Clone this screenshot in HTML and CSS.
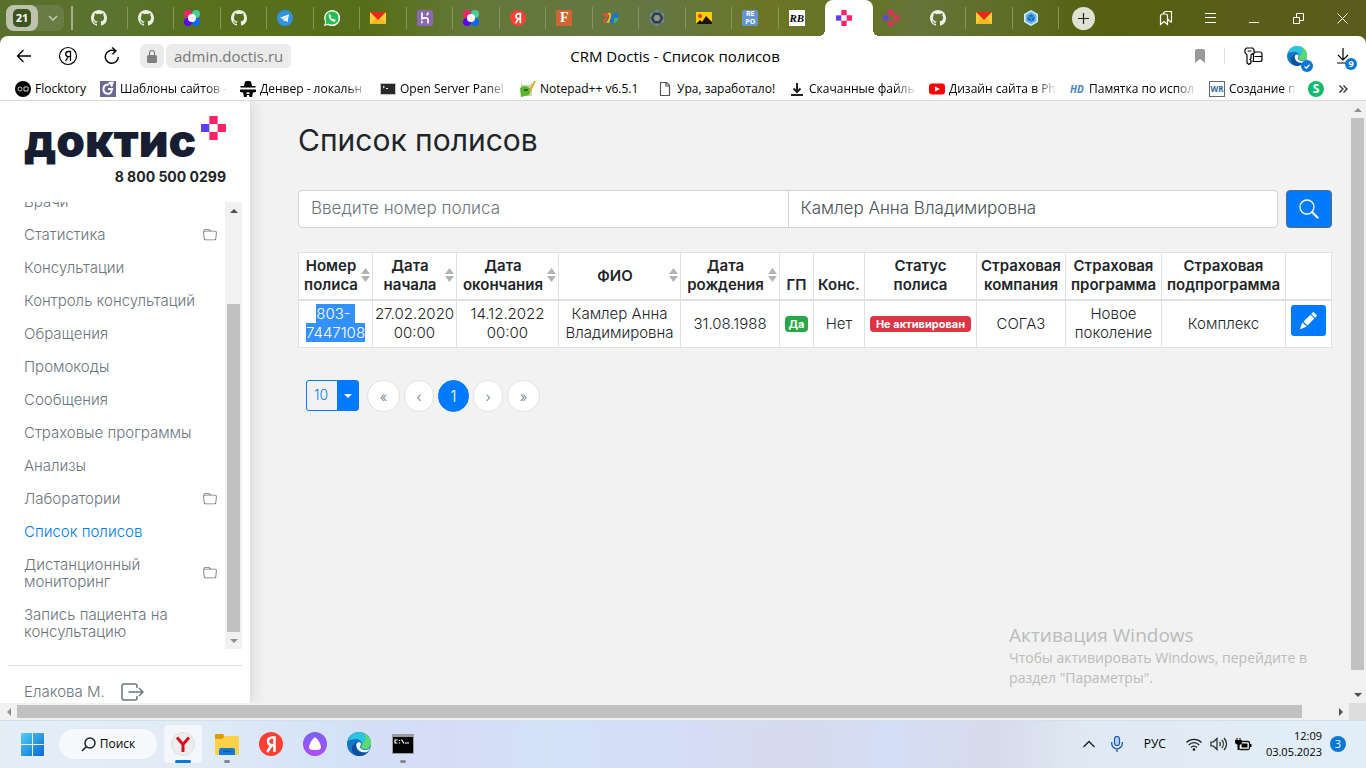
FILE: index.html
```html
<!DOCTYPE html>
<html lang="ru">
<head>
<meta charset="utf-8">
<title>CRM Doctis - Список полисов</title>
<link rel="stylesheet" href="styles.css">
</head>
<body>
<svg class="defs" aria-hidden="true">
  <symbol id="github" viewBox="0 0 16 16"><path fill="currentColor" d="M8 0C3.58 0 0 3.58 0 8c0 3.54 2.29 6.53 5.47 7.59.4.07.55-.17.55-.38 0-.19-.01-.82-.01-1.49-2.01.37-2.53-.49-2.69-.94-.09-.23-.48-.94-.82-1.13-.28-.15-.68-.52-.01-.53.63-.01 1.08.58 1.23.82.72 1.21 1.87.87 2.33.66.07-.52.28-.87.51-1.07-1.78-.2-3.64-.89-3.64-3.95 0-.87.31-1.59.82-2.15-.08-.2-.36-1.02.08-2.12 0 0 .67-.21 2.2.82a7.6 7.6 0 0 1 4 0c1.53-1.04 2.2-.82 2.2-.82.44 1.1.16 1.92.08 2.12.51.56.82 1.27.82 2.15 0 3.07-1.87 3.75-3.65 3.95.29.25.54.73.54 1.48 0 1.07-.01 1.93-.01 2.2 0 .21.15.46.55.38A8 8 0 0 0 16 8c0-4.42-3.58-8-8-8z"/></symbol>
  <symbol id="mail" viewBox="0 0 16 16"><path fill="#fc3" d="M0 2h16v12H0z"/><path fill="#f6b91c" d="M0 14 6 8l2 2 2-2 6 6z"/><path fill="#e8281e" d="M0 2h16L8 10z"/></symbol>
  <symbol id="dots" viewBox="0 0 16 16"><circle cx="4" cy="4" r="4" fill="#f0226b"/><circle cx="12" cy="4" r="4" fill="#4acb9c"/><circle cx="4" cy="12" r="4" fill="#5a00f0"/><circle cx="12" cy="12" r="4" fill="#0a66ff"/><circle cx="8" cy="8" r="4" fill="#fff"/></symbol>
  <symbol id="cross" viewBox="0 0 15 15"><path fill="#ff2168" d="M5 0h5v5H5zM10 5h5v5h-5zM5 10h5v5H5z"/><path fill="#5f3df5" d="M0 5h5v5H0z"/></symbol>
  <symbol id="edge" viewBox="0 0 24 24"><circle cx="12" cy="12" r="12" fill="#1178c8"/><path fill="#2cc3dc" d="M1 9C3 3 7 0 12 0c7 0 12 5 12 11 0 4-3 6-6 6-2 0-4-1-4-2s1-1 1-3c0-3-3-5-6-5-4 0-7 1-8 2z"/><path fill="#5fd86a" d="M17 1c4 2 7 6 7 10s-3 6-6 6c-2 0-4-1-4-2s1-1 1-3c3-1 5-6 2-11z"/><path fill="#0b4f9e" d="M9 13c0 6 5 9 11 7 1 0 2-1 2-1-2 3-6 5-10 5-5 0-8-5-7-9 1-3 4-5 6-5-1 1-2 2-2 3z"/><path fill="#fff" d="M10 11c1-1 4-1 4 1 0 1-1 2-1 3s2 3 5 3c2 0 4-1 5-2-1 2-2 3-3 4-5 1-9-1-10-4-1-2-1-4 0-5z"/></symbol>
  <symbol id="folder" viewBox="0 0 16 16"><path fill="currentColor" d="M.54 3.87.5 3a2 2 0 0 1 2-2h3.67a2 2 0 0 1 1.42.59l.82.82A2 2 0 0 0 9.83 3h3.98a2 2 0 0 1 1.99 2.18l-.64 7A2 2 0 0 1 13.17 14H2.83a2 2 0 0 1-1.99-1.82l-.64-7a2 2 0 0 1 .34-1.31zM2.19 4a1 1 0 0 0-1 1.09l.64 7a1 1 0 0 0 1 .91h10.34a1 1 0 0 0 1-.91l.64-7A1 1 0 0 0 13.81 4H2.19zm4.69-1.71A1 1 0 0 0 6.17 2H2.5a1 1 0 0 0-1 .98v.12c.23-.07.46-.1.69-.1h5.4l-.71-.71z"/></symbol>
  <symbol id="sort" viewBox="0 0 9 14"><path fill="#b3b3b3" d="M0 6 4.500 0 9 6zM0 8h9l-4.500 6z"/></symbol>
  <symbol id="ya" viewBox="0 0 24 24"><circle cx="12" cy="12" r="12" fill="#fc3f32"/><path fill="none" stroke="#fff" stroke-width="2.600" d="M15.500 20V5.500h-2.200c-3 0-4.300 1.800-4.300 3.800 0 2.600 1.600 3.900 4.300 3.900h2.200M12.500 13 8.300 20"/></symbol>
</svg>

<header class="tabs">
  <button class="counter" aria-label="21 вкладка"><span class="counter-num"><b>21</b></span><svg width="10" height="6" viewBox="0 0 10 6"><path fill="none" stroke="#c3cbb0" stroke-width="1.500" d="m1 1 4 4 4-4"/></svg></button>
  <span class="strip-line"></span>
  <nav class="tab-list" aria-label="Вкладки">
    <a class="tab" href="#"><svg><use href="#github"/></svg></a>
    <a class="tab" href="#"><svg><use href="#github"/></svg></a>
    <a class="tab" href="#"><svg><use href="#dots"/></svg></a>
    <a class="tab" href="#"><svg><use href="#github"/></svg></a>
    <a class="tab" href="#"><svg viewBox="0 0 16 16"><circle cx="8" cy="8" r="8" fill="#2f93e4"/><path fill="#fff" d="m3 7.800 9-3.500-1.500 8-2.500-2-1.300 1.300L6.400 9.300z"/><path stroke="#9cc6ee" d="m6.400 9.300 4-3"/></svg></a>
    <a class="tab" href="#"><svg viewBox="0 0 16 16"><path fill="#fff" d="M0 16 1.200 12A8 8 0 1 1 4 14.900z"/><circle cx="8" cy="8" r="6.600" fill="#22c04b"/><path fill="#22c04b" d="m1.500 14.500 1-3.500 2.500 2.500z"/><path fill="none" stroke="#fff" stroke-width="1.800" d="M5.500 5c-.5 3 2.500 6 5.500 6"/><path fill="#fff" d="M4.500 4.500h2l.7 2-1 .8zM8.800 9.800l.8-1 2 1-.2 1.700z"/></svg></a>
    <a class="tab" href="#"><svg><use href="#mail"/></svg></a>
    <a class="tab" href="#"><svg viewBox="0 0 16 16"><rect width="16" height="16" rx="2" fill="#8a68b2"/><path fill="none" stroke="#fff" stroke-width="1.700" d="M5 2.500v6.200c2-.9 6-1.500 6 .8v4M11 2.500c0 1.200-.5 2-1.200 2.800"/><path fill="#fff" d="m4.200 10 2 2-2 2z"/></svg></a>
    <a class="tab" href="#"><svg><use href="#dots"/></svg></a>
    <a class="tab" href="#"><svg><use href="#ya"/></svg></a>
    <a class="tab" href="#"><span class="fav fav-f">F</span></a>
    <a class="tab" href="#"><svg viewBox="0 0 16 16"><circle cx="1.700" cy="4.500" r="1.500" fill="#ff4b32"/><path stroke="#ff4b32" stroke-width="1.800" d="m1 13 4-10"/><path fill="none" stroke="#f9b91f" stroke-width="1.800" d="M5 4c3-2 3 3 0 8h3"/><path fill="#1a73d8" d="m8 8 3-5h2c3 0 3 4 1 5 2 1 1 5-2 5H6z"/><path fill="#40b25a" d="M11 8h4c0 4-2 5-4 5z"/></svg></a>
    <a class="tab" href="#"><svg viewBox="0 0 16 16"><path fill="#71879a" d="m8 0 7 4v8l-7 4-7-4V4z"/><path fill="#8b928c" stroke="#303c46" stroke-width="2.400" d="M5.500 3.800h5L13 8l-2.500 4.200h-5L3 8z"/></svg></a>
    <a class="tab" href="#"><svg viewBox="0 0 16 16"><path fill="#fc0" d="M0 2h16v12H0z"/><circle cx="4" cy="6" r="2" fill="#f22d22"/><path fill="#15130a" d="m0 14 4-4 2 2 4-6 6 6v2z"/></svg></a>
    <a class="tab" href="#"><span class="fav fav-repo">RE<br>PO</span></a>
    <a class="tab bare" href="#"><span class="fav fav-rb">RB</span></a>
    <a class="tab active" href="#" aria-current="page"><svg><use href="#cross"/></svg></a>
    <a class="tab dim" href="#"><svg><use href="#cross"/></svg></a>
    <a class="tab" href="#"><svg><use href="#github"/></svg></a>
    <a class="tab" href="#"><svg><use href="#mail"/></svg></a>
    <a class="tab" href="#"><svg viewBox="0 0 16 16"><path fill="#d9effc" d="m8 0 7 4v8l-7 4-7-4V4z"/><path fill="#6bb8ea" d="m8 1.500 5.500 3.200v6.600L8 14.500l-5.500-3.200V4.700z"/><path fill="#1670bd" d="m8 4 3.500 2v4L8 12l-3.500-2V6z"/><path stroke="#7fc4ee" fill="none" stroke-width=".600" d="M4.500 6 8 8l3.500-2M8 8v4"/></svg></a>
  </nav>
  <div class="window-tools">
    <button class="new-tab" aria-label="Новая вкладка"><svg width="11" height="11" viewBox="0 0 11 11"><path stroke="#222" stroke-width="1.200" d="M5.500 0v11M0 5.500h11"/></svg></button>
    <div class="window-buttons">
      <button aria-label="Коллекции"><svg width="14" height="16" viewBox="0 0 14 16"><path fill="none" stroke="#fff" stroke-width="1.200" d="M1.500 6a2 2 0 0 1 2-2h3a2 2 0 0 1 2 2v8.500L5 11.500l-3.500 3zM4.500 4V3.500a2 2 0 0 1 2-2h6v10.500h-1L8.500 9"/></svg></button>
      <button aria-label="Меню"><svg width="11" height="10" viewBox="0 0 11 10"><path stroke="#fff" d="M0 .500h11M0 4.500h11M0 9.500h11"/></svg></button>
      <button aria-label="Свернуть"><svg width="10" height="10" viewBox="0 0 10 10"><path stroke="#fff" d="M0 9.500h10"/></svg></button>
      <button aria-label="Свернуть в окно"><svg width="11" height="11" viewBox="0 0 11 11"><path fill="none" stroke="#fff" d="M.500 4.500h6v6h-6zM3.500 4V.500h7v7H7"/></svg></button>
      <button aria-label="Закрыть"><svg width="11" height="11" viewBox="0 0 11 11"><path stroke="#fff" d="m.500.500 10 10M10.500.500l-10 10"/></svg></button>
    </div>
  </div>
</header>

<div class="toolbar">
  <div class="nav-tools">
    <button aria-label="Назад"><svg width="16" height="14" viewBox="0 0 16 14"><path fill="none" stroke="#000" stroke-width="1.300" d="M15 7H1.500M7.500 1l-6 6 6 6"/></svg></button>
    <button aria-label="Яндекс"><svg width="20" height="20" viewBox="0 0 20 20"><circle cx="10" cy="10" r="8.500" fill="none" stroke="#000" stroke-width="1.200"/><path fill="none" stroke="#000" stroke-width="1.300" d="M12.500 15V5.500h-1.800c-2 0-3 1.100-3 2.600 0 1.700 1 2.600 3 2.600h1.800M10.300 10.700 7.500 15"/></svg></button>
    <button aria-label="Обновить"><svg width="16" height="18" viewBox="0 0 16 18"><path fill="none" stroke="#000" stroke-width="1.400" d="M14.300 10a6.500 6.500 0 1 1-4.300-6.300h2M8 .500l4 3.300-3.500 3.500"/></svg></button>
    <span class="lock"><svg width="10" height="13" viewBox="0 0 10 13"><rect y="5" width="10" height="8" rx="1.500" fill="#808080"/><path fill="none" stroke="#808080" stroke-width="1.200" d="M2.500 6V3a2.500 2.500 0 0 1 5 0v3"/></svg></span>
    <a class="url" href="#">admin.doctis.ru</a>
  </div>
  <div class="page-title">CRM Doctis - Список полисов</div>
  <div class="ext-tools">
    <button aria-label="В закладки"><svg width="12" height="14" viewBox="0 0 12 14"><path fill="#999" d="M1 2a2 2 0 0 1 2-2h6a2 2 0 0 1 2 2v12L6 10l-5 4z"/></svg></button>
    <span class="ext-line"></span>
    <button class="keys" aria-label="Пароли"><svg width="19" height="18" viewBox="0 0 19 18"><path fill="none" stroke="#000" stroke-width="1.200" d="M10 5V2.500L8.500 1h-6L1 2.500v3L3 8v8l2 1.500L7 16v-2.500L6 12.500l1-1.300V8l2.500-2M3.500 4h4M9 14.500h7a2 2 0 0 0 2-2V7a2 2 0 0 0-2-2h-5L9.500 7v6zM10.500 9.500H18"/></svg></button>
    <button class="edge-btn" aria-label="Edge"><svg width="20" height="20"><use href="#edge"/></svg><span class="dot-badge"><svg width="6" height="5" viewBox="0 0 6 5"><path fill="none" stroke="#fff" stroke-width="1.300" d="m.500 2.500 1.800 1.700L5.500.700"/></svg></span></button>
    <button class="downloads" aria-label="Загрузки"><svg width="14" height="16" viewBox="0 0 14 16"><path fill="none" stroke="#000" stroke-width="1.200" d="M7 0v12M2 7l5 5 5-5M1 15h12"/></svg><span class="dot-badge">9</span></button>
  </div>
</div>

<nav class="bookmarks" aria-label="Закладки">
  <a class="natural" href="#"><svg viewBox="0 0 16 16"><circle cx="8" cy="8" r="8" fill="#000"/><circle cx="5" cy="8" r="2" fill="none" stroke="#ccc"/><path fill="none" stroke="#ccc" d="M9 6h4v4H9z"/></svg><span>Flocktory</span></a>
  <a href="#"><svg viewBox="0 0 16 16"><path fill="#6b6797" d="M0 0h16v16H0z"/><path fill="none" stroke="#fff" stroke-width="2" d="M9 3.500C5 3 3 5.500 3.500 9s5 5 7.500 2.500L12 8H8"/><path fill="#fff" d="m8 1 6-.500-2 6z"/></svg><span>Шаблоны сайтов -</span></a>
  <a href="#"><svg viewBox="0 0 16 16"><path d="M4 5 5 .500 7 0h2l2 .500L12 5h3.500v1.500H.500V5zM0 8.500h16V11l-3 .500-1 4.500H9.500L9 14H7l-.500 2H4l-1-4.500L0 11z"/><path fill="#fff" d="m6 12 2-.800 2 .800-1 1H7z"/></svg><span>Денвер - локальн</span></a>
  <a href="#"><svg viewBox="0 0 16 16"><path fill="#c4c4c4" d="M0 2h16v12H0z"/><path fill="#292929" d="M1 3h14v10H1z"/><path fill="none" stroke="#eee" d="m3 5 1.500 1L3 7M6 7.500h2"/></svg><span>Open Server Panel</span></a>
  <a class="mid" href="#"><svg viewBox="0 0 16 16"><path fill="#ccd8a4" d="M1 2h11v13H1z"/><path fill="#fff" d="M2 1h9v3H2z"/><path fill="#59b52b" d="M0 7c4-3 9-2 11 2l-2 5-8 2z"/><path fill="#286f1c" d="M4 8h4v2H4z"/><path stroke="#e8ab2c" stroke-width="2" d="m10 10 5-10"/></svg><span>Notepad++ v6.5.1</span></a>
  <a class="short" href="#"><svg viewBox="0 0 16 16"><path fill="#fff" stroke="#555" stroke-width="1.200" d="M3.500 1.500h6l3 3v10h-9zM9 1.500V5h3.500"/></svg><span>Ура, заработало!</span></a>
  <a href="#"><svg viewBox="0 0 16 16"><path fill="none" stroke="#222" stroke-width="2" d="M8 2v9M4.500 7.500 8 11l3.500-3.500M2 14h12"/></svg><span>Скачанные файль</span></a>
  <a href="#"><svg viewBox="0 0 16 16"><rect y="2.500" width="16" height="11" rx="3" fill="#f00"/><path fill="#fff" d="m6 5.500 5 2.500-5 2.500z"/></svg><span>Дизайн сайта в Ph</span></a>
  <a href="#"><b class="fav-hd">HD</b><span>Памятка по испол</span></a>
  <a class="tight" href="#"><b class="fav-wr">WR</b><span>Создание п</span></a>
  <a class="icon-only" href="#" aria-label="S"><b class="fav-s">S</b></a>
  <button class="more" aria-label="Ещё"><svg width="9" height="8" viewBox="0 0 9 8"><path fill="none" stroke="#222" stroke-width="1.200" d="m.500.500 3.500 3.500-3.500 3.500M4.500.500 8 4 4.500 7.500"/></svg></button>
</nav>

<div class="viewport">
  <div class="page">
    <aside class="sidebar">
      <div class="brand">
        <a class="logo" href="#"><span>доктис</span><svg width="25" height="24" viewBox="0 0 15 15" preserveAspectRatio="none"><use href="#cross"/></svg></a>
        <div class="phone">8 800 500 0299</div>
      </div>
      <div class="menu-box">
        <ul class="menu">
          <li><a href="#">Врачи</a></li>
          <li><a href="#">Статистика</a><svg><use href="#folder"/></svg></li>
          <li><a href="#">Консультации</a></li>
          <li><a href="#">Контроль консультаций</a></li>
          <li><a href="#">Обращения</a></li>
          <li><a href="#">Промокоды</a></li>
          <li><a href="#">Сообщения</a></li>
          <li><a href="#">Страховые программы</a></li>
          <li><a href="#">Анализы</a></li>
          <li><a href="#">Лаборатории</a><svg><use href="#folder"/></svg></li>
          <li><a class="current" href="#">Список полисов</a></li>
          <li><a href="#">Дистанционный<br>мониторинг</a><svg><use href="#folder"/></svg></li>
          <li><a href="#">Запись пациента на<br>консультацию</a></li>
        </ul>
        <div class="scroll-y menu-scroll">
          <i class="arrow up"></i><div class="thumb"></div><i class="arrow down faded"></i>
        </div>
      </div>
      <div class="user">
        <span>Елакова М.</span>
        <button aria-label="Выйти"><svg width="23" height="18" viewBox="0 0 23 18"><path fill="none" stroke="#6c757d" stroke-width="1.500" d="M16 5V3a2 2 0 0 0-2-2H3a2 2 0 0 0-2 2v12a2 2 0 0 0 2 2h11a2 2 0 0 0 2-2v-2M7.500 9H22M18 5l4 4-4 4"/></svg></button>
      </div>
    </aside>

    <main class="content">
      <h1>Список полисов</h1>
      <form class="search">
        <input class="first" type="text" placeholder="Введите номер полиса" aria-label="Номер полиса">
        <input class="last" type="text" value="Камлер Анна Владимировна" aria-label="ФИО">
        <button type="button" aria-label="Найти"><svg width="20" height="20" viewBox="0 0 20 20"><circle cx="8" cy="8" r="7" fill="none" stroke="#fff" stroke-width="1.300"/><path stroke="#fff" stroke-width="2.200" stroke-linecap="round" d="m14 14 4.500 4.500"/><path stroke="#fff" stroke-width="1.300" d="m12.500 12.500 2 2"/></svg></button>
      </form>

      <table>
        <colgroup><col class="c74"><col class="c84"><col class="c102"><col class="c122"><col class="c99"><col class="c34"><col class="c51"><col class="c112"><col class="c89"><col class="c96"><col class="c124"><col class="c46"></colgroup>
        <thead>
          <tr>
            <th class="sortable"><div><span>Номер<br>полиса</span><svg><use href="#sort"/></svg></div></th>
            <th class="sortable"><div><span>Дата<br>начала</span><svg><use href="#sort"/></svg></div></th>
            <th class="sortable"><div><span>Дата<br>окончания</span><svg><use href="#sort"/></svg></div></th>
            <th class="sortable"><div><span>ФИО</span><svg><use href="#sort"/></svg></div></th>
            <th class="sortable"><div><span>Дата<br>рождения</span><svg><use href="#sort"/></svg></div></th>
            <th>ГП</th>
            <th>Конс.</th>
            <th>Статус<br>полиса</th>
            <th>Страховая<br>компания</th>
            <th>Страховая<br>программа</th>
            <th>Страховая<br>подпрограмма</th>
            <th></th>
          </tr>
        </thead>
        <tbody>
          <tr>
            <td><mark>803- <br>7447108</mark></td>
            <td>27.02.2020<br>00:00</td>
            <td>14.12.2022<br>00:00</td>
            <td>Камлер Анна<br>Владимировна</td>
            <td>31.08.1988</td>
            <td><span class="badge yes">Да</span></td>
            <td>Нет</td>
            <td><span class="badge no">Не активирован</span></td>
            <td>СОГАЗ</td>
            <td>Новое<br>поколение</td>
            <td>Комплекс</td>
            <td class="action"><button aria-label="Изменить"><svg width="17" height="17" viewBox="0 0 16 16"><path fill="#fff" d="m12.850.150a.5.5 0 0 0-.7 0L10.500 1.790 14.210 5.500l1.640-1.650a.5.5 0 0 0 0-.7zM13.500 6.210 9.790 2.500 3.290 9h.210a.5.5 0 0 1 .5.5v.5h.5a.5.5 0 0 1 .5.5v.5h.5a.5.5 0 0 1 .5.5v.5h.5a.5.5 0 0 1 .5.5v.210zM6.030 13.680A.5.500 0 0 1 6 13.500V13h-.5a.5.5 0 0 1-.5-.5V12h-.5a.5.5 0 0 1-.5-.5V11h-.5a.5.500 0 0 1-.5-.5V10h-.5a.5.5 0 0 1-.180-.030l-.180.180L.140 15.310a.5.5 0 0 0 .650.650l5.160-2.110z"/></svg></button></td>
          </tr>
        </tbody>
      </table>

      <div class="pager">
        <label class="page-size"><select aria-label="Строк на странице"><option>10</option></select><span></span></label>
        <button class="wide" aria-label="Первая">«</button>
        <button aria-label="Предыдущая">‹</button>
        <button class="on">1</button>
        <button aria-label="Следующая">›</button>
        <button class="wide" aria-label="Последняя">»</button>
      </div>

      <div class="watermark"><strong>Активация Windows</strong><p>Чтобы активировать Windows, перейдите в<br>раздел "Параметры".</p></div>
    </main>
  </div>
  <div class="scroll-y page-scroll"><i class="arrow up faded"></i><div class="thumb"></div><i class="arrow down"></i></div>
  <div class="scroll-x"><i class="arrow left faded"></i><div class="thumb"></div><i class="arrow right"></i></div>
  <div class="corner"></div>
</div>

<footer class="taskbar">
  <div class="apps">
    <button aria-label="Пуск"><svg width="23" height="23" viewBox="0 0 23 23"><defs><linearGradient id="win" x2="1" y2="1"><stop stop-color="#4fd0fb"/><stop offset="1" stop-color="#0a67cc"/></linearGradient></defs><path fill="url(#win)" d="M0 1a1 1 0 0 1 1-1h10v11H0zM12 0h10a1 1 0 0 1 1 1v10H12zM0 12h11v11H1a1 1 0 0 1-1-1zM12 12h11v10a1 1 0 0 1-1 1H12z"/></svg></button>
    <button class="find"><svg width="15" height="15" viewBox="0 0 15 15"><circle cx="9" cy="6" r="5" fill="none" stroke="#222" stroke-width="1.500"/><path stroke="#222" stroke-width="1.700" d="M5.500 9.500 1 14"/></svg><span>Поиск</span></button>
    <button class="running focused" aria-label="Яндекс Браузер"><svg width="24" height="24" viewBox="0 0 24 24"><circle cx="12" cy="12" r="11.500" fill="#eee" stroke="#ddd"/><path fill="none" stroke="#d5101c" stroke-width="3" d="m6 5.500 6 7 6-7M12 12v8"/></svg></button>
    <button class="running" aria-label="Проводник"><svg width="24" height="24" viewBox="0 0 24 24"><path fill="#dd9b0a" d="M0 3a1 1 0 0 1 1-1h7l2 3v4H0z"/><path fill="#ffd04a" d="M0 7h7l3-3h13a1 1 0 0 1 1 1v17a1 1 0 0 1-1 1H0z"/><path fill="#1479d3" d="M4 23v-5a2 2 0 0 1 2-2h12a2 2 0 0 1 2 2v5z"/><path fill="#0b5aa9" d="M8 18.500h8v1.500H8z"/></svg></button>
    <button aria-label="Яндекс"><svg width="24" height="24"><use href="#ya"/></svg></button>
    <button aria-label="Алиса"><svg width="24" height="24" viewBox="0 0 24 24"><defs><linearGradient id="alice" x2="0" y2="1"><stop stop-color="#7562f4"/><stop offset="1" stop-color="#b24bf5"/></linearGradient></defs><circle cx="12" cy="12" r="12" fill="url(#alice)"/><path fill="#fff" d="M12 5.500c2 0 6 7 6 9.500s-2 3-6 3-6-.500-6-3 4-9.500 6-9.500z"/></svg></button>
    <button aria-label="Edge"><svg width="24" height="24"><use href="#edge"/></svg></button>
    <button class="running" aria-label="Командная строка"><svg width="24" height="24" viewBox="0 0 24 24"><path fill="#9b9b9b" d="M1 2h22v20H1z"/><path fill="#050505" d="M2 5h20v16H2z"/><path fill="none" stroke="#fff" stroke-width="1.200" d="M6.500 8H4v3h2.500M8.500 8v1M8.500 10.500v1M10.500 7.500l2.500 4M14 11h4"/></svg></button>
  </div>
  <div class="tray">
    <svg width="12" height="8" viewBox="0 0 12 8"><path fill="none" stroke="#1b1b1b" stroke-width="1.300" d="m.500 7 5.500-5.500L11.500 7"/></svg>
    <svg class="mic" width="12" height="16" viewBox="0 0 12 16"><rect x="3.500" y=".500" width="5" height="9" rx="2.500" fill="#b8d0f2" stroke="#1a57ae" stroke-width="1.200"/><path fill="none" stroke="#1a57ae" stroke-width="1.300" d="M.700 6v1.500a5.300 5.300 0 0 0 10.600 0V6M6 13v3"/></svg>
    <span class="lang">РУС</span>
    <svg class="wifi" width="16" height="13" viewBox="0 0 16 13"><path fill="none" stroke="#222" stroke-width="1.200" d="M.500 4.500a10.500 10.500 0 0 1 15 0M2.800 7a7 7 0 0 1 10.400 0M5 9.500a4 4 0 0 1 6 0"/><circle cx="8" cy="11.500" r="1.300"/></svg>
    <svg class="sound" width="17" height="14" viewBox="0 0 17 14"><path fill="none" stroke="#222" stroke-width="1.200" d="M1 5h2.500L7 1.500v11L3.500 9H1zM9.500 5a3 3 0 0 1 0 4M11.800 3a6 6 0 0 1 0 8M14 1a8.500 8.500 0 0 1 0 12"/></svg>
    <svg class="battery" width="17" height="13" viewBox="0 0 17 13"><rect x="4" y="3.500" width="10.500" height="8" rx="1.500" fill="#fff" stroke="#111" stroke-width="1.300"/><path d="M6.500 5.500h6v4h-6zM15 6h1.500v3H15zM0 2h1.500V0h1v2h2V0h1v2H7v3L5 7H4v5H2.500V7L0 5z"/></svg>
    <div class="clock">12:09<br>03.05.2023</div>
    <span class="notify">3</span>
  </div>
</footer>
</body>
</html>
```
FILE: styles.css
```css
* { box-sizing: border-box; }
body {
  margin: 0;
  height: 100vh;
  display: flex;
  flex-direction: column;
  overflow: hidden;
  background: #fff;
  font-family: "Open Sans", "Noto Sans", sans-serif;
  color: #000;
}
button, input, select { font: inherit; color: inherit; margin: 0; }
button { border: 0; padding: 0; background: none; display: flex; align-items: center; justify-content: center; }
a { color: inherit; text-decoration: none; }
svg { display: block; flex: none; }
.defs { position: absolute; width: 0; height: 0; }

/* tab strip */
.tabs {
  flex: none;
  height: 46px;
  display: flex;
  align-items: center;
  padding: 0 0 10px 6px;
  background: linear-gradient(90deg, #59702c, #5b7330 8%, #56701f 14%, #566e18 27%, #627838 34%, #647743 48%, #6b7626 56%, #667225 63%, #66753a 67%, #5d6b22 75%, #556012 80%, #5c5c1d 100%);
}
.counter { width: 58px; height: 26px; border-radius: 8px; background: #71845299; justify-content: flex-start; gap: 10px; }
.counter-num { width: 32px; height: 26px; border-radius: 8px; background: #bcc2ab; display: flex; align-items: center; justify-content: center; }
.counter-num b { width: 18px; height: 18px; border-radius: 5px; background: #3f5320; color: #fff; font-size: 11px; line-height: 18px; text-align: center; }
.strip-line { width: 2px; height: 24px; margin: 0 8px 0 7px; background: #a5ae91; }
.tab-list { flex: 1; display: flex; height: 36px; }
.tab { flex: 1; display: flex; align-items: center; justify-content: center; padding-right: 9px; color: #ecefe4; border-right: 1px solid; border-image: linear-gradient(transparent 22%, #89955f 22%, #89955f 78%, transparent 78%) 1; }
.tab svg { width: 16px; height: 16px; }
.tab.bare, .tab.dim { border-image: none; border-color: transparent; }
.tab.active { position: relative; flex: 0 0 48px; padding-right: 10px; background: #fff; border: 0; border-radius: 8px 8px 0 0; }
.active::before, .active::after { content: ""; position: absolute; bottom: 0; width: 6px; height: 6px; }
.active::before { right: 100%; background: radial-gradient(circle at 0 0, transparent 6px, #fff 6px); }
.active::after { left: 100%; background: radial-gradient(circle at 100% 0, transparent 6px, #fff 6px); }
.tab.dim svg { opacity: 0.8; }
.fav { width: 16px; height: 16px; font-weight: 700; text-align: center; overflow: hidden; }
.fav-f { background: #d1652f; color: #fff; font: 700 14px/16px "Liberation Serif", serif; }
.fav-repo { background: #6595cf; color: #fff; font-size: 7px; line-height: 8px; border-radius: 2px; }
.fav-rb { background: #fff; color: #000; font: italic 700 11px/16px "Liberation Serif", serif; }
.window-tools { flex: none; width: 307px; display: flex; justify-content: space-between; align-items: center; padding: 0 2px 0 13px; }
.new-tab { width: 23px; height: 23px; border-radius: 50%; background: #dfe1d2; }
.window-buttons { display: flex; }
.window-buttons button { width: 44px; height: 36px; }

/* address bar */
.toolbar { flex: none; height: 40px; margin-top: -10px; border-radius: 8px 8px 0 0; background: #fff; display: grid; grid-template-columns: 1fr auto 1fr; align-items: center; padding-right: 16px; }
.nav-tools { display: flex; align-items: center; padding-left: 2px; }
.nav-tools button { width: 44px; height: 40px; }
.lock { width: 24px; height: 24px; margin: 0 2px 0 6px; border-radius: 6px; background: #ebebeb; display: flex; align-items: center; justify-content: center; }
.url { height: 24px; padding: 0 8px; border-radius: 6px; background: #ebebeb; color: #777; font-size: 15px; line-height: 24px; }
.page-title { font-size: 15px; line-height: 24px; }
.ext-tools { display: flex; align-items: center; justify-content: flex-end; }
.ext-line { width: 1px; height: 16px; margin: 0 19px 0 18px; background: #ddd; }
.edge-btn { position: relative; margin-left: 24px; }
.downloads { position: relative; margin-left: 29px; }
.dot-badge { position: absolute; left: 14px; top: 14px; width: 12px; height: 12px; border-radius: 50%; background: #0a78d4; color: #fff; font-size: 9px; font-weight: 700; line-height: 12px; display: flex; align-items: center; justify-content: center; }
.downloads .dot-badge { left: 9px; top: 10px; }

/* bookmarks */
.bookmarks { flex: none; height: 25px; display: flex; align-items: center; gap: 12px; padding: 1px 0 0 15px; border-bottom: 1px solid #d8d8d8; font-size: 12px; line-height: 18px; }
.bookmarks a { flex: none; width: 128px; display: flex; align-items: center; gap: 4px; }
.bookmarks a svg { width: 16px; height: 16px; }
.bookmarks span { flex: 1; white-space: nowrap; overflow: hidden; mask-image: linear-gradient(90deg, #000 80%, transparent); }
.bookmarks .natural, .bookmarks .mid, .bookmarks .short { width: 73px; }
.bookmarks .mid { width: 125px; }
.bookmarks .short { width: 120px; }
.bookmarks .natural span, .bookmarks .mid span, .bookmarks .short span { mask-image: none; }
.bookmarks .tight { width: 87px; }
.bookmarks .icon-only { width: 16px; }
.bookmarks b { flex: none; width: 16px; height: 16px; line-height: 16px; text-align: center; }
.fav-hd { color: #4a83bb; font-size: 10px; font-style: italic; }
.fav-wr { color: #2f689c; border: 1px solid #666; font-size: 8px; }
.bookmarks .fav-wr { line-height: 14px; }
.fav-s { border-radius: 50%; background: #10bd6d; color: #fff; }
.more { width: 15px; }

/* viewport and scroll bars */
.viewport { flex: 1; min-height: 0; display: grid; grid-template: 1fr 17px / 1fr 17px; background: #f1f1f1; }
.page { display: flex; min-width: 0; min-height: 0; overflow: hidden; background: #f2f2f2; }
.scroll-y { width: 17px; display: flex; flex-direction: column; align-items: center; background: #f1f1f1; }
.scroll-x { height: 17px; display: flex; align-items: center; }
.arrow { flex: none; width: 17px; height: 17px; display: flex; align-items: center; justify-content: center; }
.arrow::before { content: ""; border: 4px solid transparent; }
.up::before { border-top: 0; border-bottom-color: #505050; }
.down::before { border-bottom: 0; border-top-color: #505050; }
.left::before { border-left: 0; border-right-color: #505050; }
.right::before { border-right: 0; border-left-color: #505050; }
.faded { opacity: 0.6; }
.thumb { background: #c1c1c1; }
.page-scroll .thumb { width: 13px; flex: 0 1 552px; }
.page-scroll .down { margin-top: auto; }
.scroll-x .thumb { flex: 1; height: 13px; margin-right: 30px; }
.corner { background: #dcdcdc; }

/* sidebar */
.sidebar, .content { font-family: Inter, "Open Sans", sans-serif; }
.sidebar { flex: none; width: 250px; padding: 0 8px; display: flex; flex-direction: column; background: #fff; box-shadow: 0 0 16px rgba(0, 0, 0, 0.16); z-index: 1; }
.brand { flex: none; height: 101px; padding: 15px 16px 0; }
.logo { display: flex; align-items: flex-start; justify-content: space-between; height: 48px; color: #171e31; font-size: 46px; font-weight: 900; line-height: 48px; }
.phone { margin-top: 4px; color: #212529; font-size: 14px; font-weight: 700; line-height: 18px; text-align: right; }
.menu-box { flex: none; height: 447px; display: flex; overflow: hidden; }
.menu { flex: 1; height: 447px; margin: 0; padding: 0; list-style: none; display: flex; flex-direction: column; justify-content: flex-end; }
.menu li { flex: none; display: flex; align-items: center; justify-content: space-between; padding: 7px 8px 9px 16px; color: #6c757d; font-size: 15px; font-weight: 300; line-height: 17px; }
.menu svg { width: 14px; height: 14px; }
.menu .current { color: #007bff; }
.menu-scroll .thumb { width: 13px; height: 328px; margin-top: auto; }
.user { flex: none; margin-top: 16px; padding: 15px 16px; border-top: 1px solid #dcdddf; display: flex; align-items: center; gap: 16px; color: #6c757d; font-size: 15px; font-weight: 300; line-height: 21px; }

/* policy list */
.content { position: relative; flex: 1; min-width: 0; padding: 22px 17px 0 48px; color: #212529; font-size: 14px; font-weight: 300; line-height: 19px; }
h1 { margin: 0 0 33px; font-size: 30px; font-weight: 400; line-height: 34px; }
.search { display: flex; margin-bottom: 24px; }
.search input { flex: 1; min-width: 0; height: 38px; padding: 0 12px 2px; border: 1px solid #ced4da; background: #fff; color: #495057; font-size: 17px; font-weight: 300; }
.search input::placeholder { color: #6c757d; opacity: 1; }
.search .first { border-radius: 4px 0 0 4px; }
.search .last { margin-left: -1px; border-radius: 0 4px 4px 0; }
.search button { flex: none; width: 46px; height: 38px; margin-left: 8px; border: 1px solid #5b6a7a; border-radius: 4px; background: #007bff; }
table { width: 100%; table-layout: fixed; border-collapse: collapse; background: #fff; font-size: 15px; text-align: center; }
th, td { padding: 3px 0 5px; border: 1px solid #dee2e6; white-space: nowrap; }
th { border-bottom-width: 2px; vertical-align: bottom; font-weight: 600; }
.sortable { vertical-align: middle; }
.sortable div { display: flex; align-items: center; padding: 0 2px; }
.sortable span { flex: 1; }
.sortable svg { width: 9px; height: 14px; }
.c74 { width: 74px; } .c84 { width: 84px; } .c102 { width: 102px; } .c122 { width: 122px; }
.c99 { width: 99px; } .c34 { width: 34px; } .c51 { width: 51px; } .c112 { width: 112px; }
.c89 { width: 89px; } .c96 { width: 96px; } .c124 { width: 124px; } .c46 { width: 46px; }
mark { background: #3390ff; color: #fff; white-space: pre-wrap; }
.badge { display: inline-block; padding: 0 4px; border-radius: 4px; color: #fff; font-size: 11px; font-weight: 700; line-height: 16px; vertical-align: middle; }
.yes { background: #28a745; }
.no { padding: 0 6px; background: #dc3545; }
.action { padding-top: 4px; vertical-align: top; }
.action button { width: 35px; height: 31px; margin: 0 auto; border-radius: 3px; background: #007bff; }
.pager { display: flex; gap: 4px; margin: 32px 8px 0; }
.pager button { width: 30px; height: 32px; border: 1px solid #dee2e6; border-radius: 16px; background: #fff; color: #6c757d; }
.pager .wide { width: 33px; }
.pager .on { width: 31px; border-color: #007bff; background: #007bff; color: #fff; font-size: 16px; }
.page-size { display: flex; height: 31px; margin-right: 4px; border: 1px solid #007bff; border-radius: 3px; background: #007bff; }
.page-size select { appearance: none; width: 30px; padding: 0 7px 2px; border: 0; border-radius: 2px 0 0 2px; background: #f2f2f2; color: #007bff; }
.page-size span { width: 21px; display: flex; align-items: center; justify-content: center; }
.page-size span::before { content: ""; border: 4px solid transparent; border-top-color: #fff; border-bottom: 0; }
.watermark { position: absolute; right: 42px; bottom: 15px; color: #bbb; font: 14px/20px "Open Sans", "Noto Sans", sans-serif; }
.watermark strong { display: block; font-size: 19px; font-weight: 400; line-height: 26px; }
.watermark p { margin: 0; }

/* task bar */
.taskbar { flex: none; height: 48px; display: flex; align-items: center; justify-content: space-between; padding: 0 20px 1px; border-top: 1px solid #d3dfeb; background: linear-gradient(90deg, #e3eef7, #e0ebf7 15%, #d4e1f7 25%, #d6dcf6 33%, #d4e2f8 40%, #d5ddf7 50%, #d6daec 58%, #d4def6 65%, #d7daea 73%, #dfe9f3 79%, #e2eef8); font-size: 12px; line-height: 16px; }
.apps { display: flex; align-items: center; }
.apps button { position: relative; width: 44px; height: 46px; }
.apps button:first-child { width: 25px; }
.apps .find { width: 98px; height: 30px; margin: 0 4px 0 14px; border-radius: 15px; background: #f6fafd; gap: 4px; }
.running::after { content: ""; position: absolute; left: 19px; bottom: 4px; width: 6px; height: 3px; border-radius: 2px; background: #85898e; }
.apps .focused { height: 38px; border-radius: 4px; background: #f3f7fd; width: 38px; margin: 0 3px; box-shadow: 0 0 0 1px #e3e9f1; }
.focused::after { left: 11px; bottom: 0; width: 16px; background: #0a78d4; }
.tray { display: flex; align-items: center; }
.mic { margin: 0 21px 0 16px; }
.wifi { margin-left: 20px; }
.sound { margin: 0 8px; }
.clock { margin-left: 14px; text-align: right; font-size: 11px; }
.notify { width: 16px; height: 16px; margin-left: 8px; border-radius: 50%; background: #0a78d4; color: #fff; font-size: 11px; text-align: center; }
```
